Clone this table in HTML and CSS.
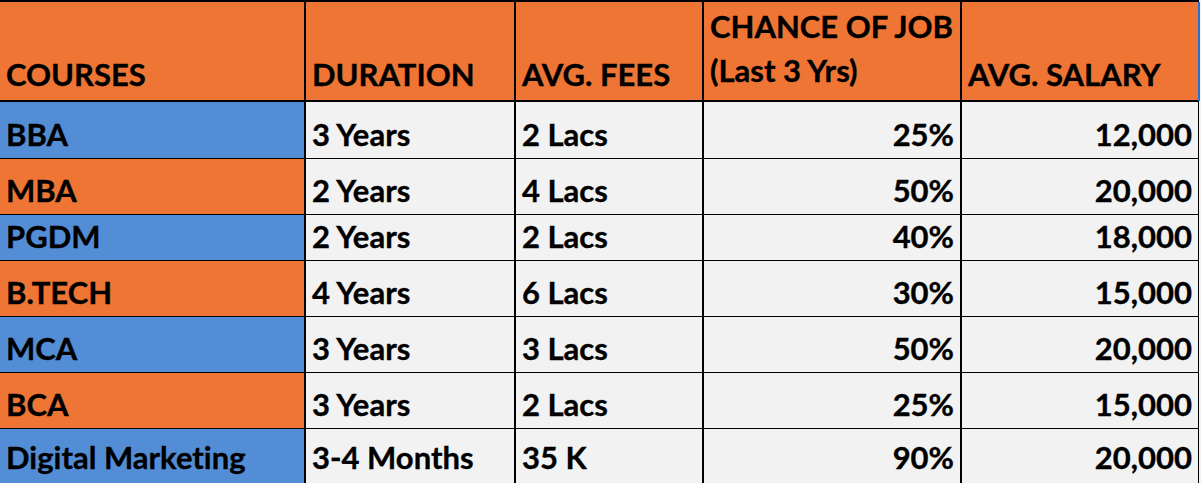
FILE: index.html
```html
<!DOCTYPE html>
<html>
<head>
<meta charset="utf-8">
<link rel="stylesheet" href="styles.css">
</head>
<body>
<div class="sheet">
  <div class="cell head">COURSES</div>
  <div class="cell head">DURATION</div>
  <div class="cell head">AVG. FEES</div>
  <div class="cell head wrap">CHANCE OF JOB<br>(Last 3 Yrs)</div>
  <div class="cell head last">AVG. SALARY</div>

  <div class="cell blue">BBA</div>
  <div class="cell">3 Years</div>
  <div class="cell">2 Lacs</div>
  <div class="cell num">25%</div>
  <div class="cell num">12,000</div>

  <div class="cell orange">MBA</div>
  <div class="cell">2 Years</div>
  <div class="cell">4 Lacs</div>
  <div class="cell num">50%</div>
  <div class="cell num">20,000</div>

  <div class="cell blue">PGDM</div>
  <div class="cell">2 Years</div>
  <div class="cell">2 Lacs</div>
  <div class="cell num">40%</div>
  <div class="cell num">18,000</div>

  <div class="cell orange">B.TECH</div>
  <div class="cell">4 Years</div>
  <div class="cell">6 Lacs</div>
  <div class="cell num">30%</div>
  <div class="cell num">15,000</div>

  <div class="cell blue">MCA</div>
  <div class="cell">3 Years</div>
  <div class="cell">3 Lacs</div>
  <div class="cell num">50%</div>
  <div class="cell num">20,000</div>

  <div class="cell orange">BCA</div>
  <div class="cell">3 Years</div>
  <div class="cell">2 Lacs</div>
  <div class="cell num">25%</div>
  <div class="cell num">15,000</div>

  <div class="cell blue end">Digital Marketing</div>
  <div class="cell end">3-4 Months</div>
  <div class="cell end">35 K</div>
  <div class="cell num end">90%</div>
  <div class="cell num end">20,000</div>
</div>
</body>
</html>
```

FILE: styles.css
```css
html, body {
  margin: 0;
  padding: 0;
  background: #f2f2f2;
  overflow: hidden;
}

.sheet {
  display: grid;
  grid-template-columns: 304px 208px 186px 256px 236px;
  grid-template-rows: 99px 56px 55px 45px 55px 55px 55px 58px;
  column-gap: 2px;
  row-gap: 1px;
  width: 1198px;
  background: #000;
  border-top: 2px solid #000;
  border-right: 1px solid #000;
  font-family: Lato, "Open Sans", sans-serif;
  font-weight: 700;
  font-size: 31px;
  font-variant-ligatures: none;
  -webkit-text-stroke: 0.35px #000;
  color: #000;
}

.cell {
  background: #f2f2f2;
  display: flex;
  flex-direction: column;
  justify-content: flex-end;
  align-items: flex-start;
  padding: 0 6px 6px 6px;
  line-height: 36px;
  white-space: nowrap;
  box-sizing: border-box;
}

.cell.end {
  padding-bottom: 12px;
}

.head {
  background: #ef7535;
  border-bottom: 1px solid #000;
  padding-bottom: 8px;
}

.head.wrap {
  line-height: 44px;
  padding-bottom: 8px;
}

.head.last {
  box-shadow: 2px 0 0 #2a6fd6;
}

.blue {
  background: #538dd5;
}

.orange {
  background: #ef7535;
}

.num {
  align-items: flex-end;
}
```
